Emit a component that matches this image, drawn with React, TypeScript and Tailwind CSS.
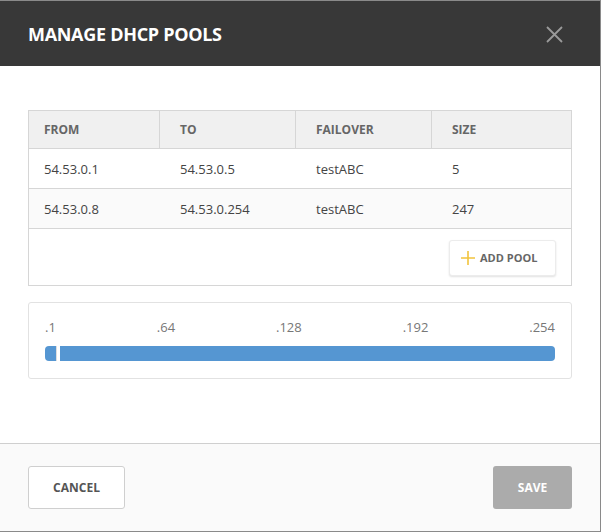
import React from "react";

interface Pool {
    from: string;
    to: string;
    failover: string;
    size: number;
}

const pools: Pool[] = [
    { from: "54.53.0.1", to: "54.53.0.5", failover: "testABC", size: 5 },
    { from: "54.53.0.8", to: "54.53.0.254", failover: "testABC", size: 247 },
];

const ticks = [".1", ".64", ".128", ".192", ".254"];

const App: React.FC = () => {
    return (
        <div className="w-[601px] h-[532px] bg-white" style={{ fontFamily: '"Open Sans", sans-serif' }}>
            <div className="w-[601px] h-[532px] flex flex-col border-t border-r border-b border-[#8a8a8a]">
                {/* header */}
                <div className="h-[65px] bg-[#383838] flex items-center justify-between pl-[28px] pr-[37px]">
                    <div className="text-white font-bold text-[18px] tracking-[-0.3px] pt-[1px]">MANAGE DHCP POOLS</div>
                    <svg width="17" height="17" viewBox="0 0 17 17" className="mt-[1px]">
                        <path d="M1 1L16 16M16 1L1 16" stroke="#9a9a9a" strokeWidth="1.8" />
                    </svg>
                </div>

                {/* body */}
                <div className="flex-1 px-[28px] pt-[44px]">
                    <div className="border border-[#d6d6d6]">
                        <div className="grid grid-cols-[131px_136px_136px_1fr] bg-[#f0f0f0] h-[38px] border-b border-[#d6d6d6] text-[12px] font-bold text-[#666]">
                            <div className="flex items-center pl-[15px] border-r border-[#d6d6d6]">FROM</div>
                            <div className="flex items-center pl-[20px] border-r border-[#d6d6d6]">TO</div>
                            <div className="flex items-center pl-[20px] border-r border-[#d6d6d6]">FAILOVER</div>
                            <div className="flex items-center pl-[20px]">SIZE</div>
                        </div>
                        {pools.map((p, i) => (
                            <div
                                key={i}
                                className={`grid grid-cols-[131px_136px_136px_1fr] h-[40px] border-b border-[#d6d6d6] text-[13px] text-[#444] pt-[2px] ${i % 2 === 1 ? "bg-[#fafafa]" : "bg-white"}`}
                            >
                                <div className="flex items-center pl-[15px]">{p.from}</div>
                                <div className="flex items-center pl-[20px]">{p.to}</div>
                                <div className="flex items-center pl-[20px]">{p.failover}</div>
                                <div className="flex items-center pl-[20px]">{p.size}</div>
                            </div>
                        ))}
                        <div className="h-[56px] flex items-center justify-end pr-[15px] pt-[2px]">
                            <button className="h-[36px] w-[107px] flex items-center pl-[11px] gap-[5px] bg-white rounded-[3px] border border-[#ececec] shadow-[0_1px_2px_rgba(0,0,0,0.12)] text-[11px] font-bold text-[#666]">
                                <svg width="14" height="14" viewBox="0 0 14 14">
                                    <path d="M7 0V14M0 7H14" stroke="#f2c43c" strokeWidth="1.6" />
                                </svg>
                                ADD POOL
                            </button>
                        </div>
                    </div>

                    <div className="mt-[16px] border border-[#e2e2e2] rounded-[3px] px-[16px] pt-[15px] h-[77px]">
                        <div className="flex justify-between text-[13px] text-[#777] leading-[18px]">
                            {ticks.map((t) => (
                                <span key={t}>{t}</span>
                            ))}
                        </div>
                        <div className="relative mt-[10px] h-[15px] bg-[#5596d2] rounded-[4px]">
                            <div className="absolute left-[11px] top-0 h-[15px] w-[4px] bg-white border-l border-[#dedede]" />
                        </div>
                    </div>
                </div>

                {/* footer */}
                <div className="h-[88px] bg-[#fafafa] border-t border-[#cfcfcf] flex items-center justify-between pl-[28px] pr-[28px]">
                    <button className="w-[97px] h-[43px] bg-white border border-[#cfcfcf] rounded-[3px] text-[12px] font-bold text-[#555]">CANCEL</button>
                    <button className="w-[79px] h-[43px] bg-[#ababab] rounded-[3px] text-[12px] font-bold text-white">SAVE</button>
                </div>
            </div>
        </div>
    );
};

export default App;
